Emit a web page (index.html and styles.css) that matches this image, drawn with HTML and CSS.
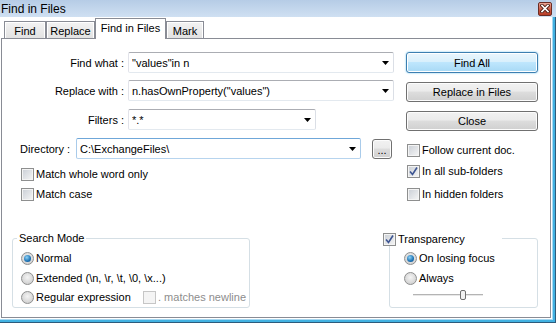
FILE: index.html
```html
<!DOCTYPE html>
<html lang="en">
<head>
  <meta charset="UTF-8">
  <meta name="viewport" content="width=device-width, initial-scale=1.0">
  <title>Find in Files</title>
  <link rel="stylesheet" href="styles.css">
</head>
<body>
  <div class="window">

    <!-- Title bar -->
    <div class="titlebar">
      <span class="title">Find in Files</span>
      <span class="close-btn">
        <svg width="10" height="9" viewBox="0 0 10 9">
          <path d="M2 1.5 L8 7.5 M8 1.5 L2 7.5" stroke="#4a1a12" stroke-width="3.4" stroke-linecap="square"/>
          <path d="M2 1.5 L8 7.5 M8 1.5 L2 7.5" stroke="#fff" stroke-width="1.7" stroke-linecap="square"/>
        </svg>
      </span>
    </div>

    <div class="frame">
      <!-- Tabs -->
      <div class="tabs">
        <div class="tab tab-find">Find</div>
        <div class="tab tab-replace">Replace</div>
        <div class="tab tab-files active">Find in Files</div>
        <div class="tab tab-mark">Mark</div>
      </div>

      <div class="panel">
        <div class="top">

          <!-- Left side: fields and options -->
          <div class="form">
            <div class="field-row">
              <span class="label">Find what :</span>
              <div class="combo combo-wide">
                <span class="combo-text">"values"in n</span>
                <svg class="arrow" width="7" height="4" viewBox="0 0 7 4"><path d="M0 0h7L3.5 4z"/></svg>
              </div>
            </div>
            <div class="field-row tight">
              <span class="label">Replace with :</span>
              <div class="combo combo-wide">
                <span class="combo-text">n.hasOwnProperty("values")</span>
                <svg class="arrow" width="7" height="4" viewBox="0 0 7 4"><path d="M0 0h7L3.5 4z"/></svg>
              </div>
            </div>
            <div class="field-row">
              <span class="label">Filters :</span>
              <div class="combo combo-filters">
                <span class="combo-text">*.*</span>
                <svg class="arrow" width="7" height="4" viewBox="0 0 7 4"><path d="M0 0h7L3.5 4z"/></svg>
              </div>
            </div>
            <div class="field-row dir-row">
              <span class="label label-dir">Directory :</span>
              <div class="combo combo-dir focused">
                <span class="combo-text">C:\ExchangeFiles\</span>
                <svg class="arrow" width="7" height="4" viewBox="0 0 7 4"><path d="M0 0h7L3.5 4z"/></svg>
              </div>
              <div class="btn browse">...</div>
            </div>

            <div class="checks checks-left">
              <div class="check"><span class="cb"></span>Match whole word only</div>
              <div class="check second"><span class="cb"></span>Match case</div>
            </div>
          </div>

          <!-- Right side: actions and folder options -->
          <div class="side">
            <div class="btn btn-default">Find All</div>
            <div class="btn">Replace in Files</div>
            <div class="btn">Close</div>

            <div class="checks checks-right">
              <div class="check"><span class="cb"></span>Follow current doc.</div>
              <div class="check sub"><span class="cb checked">
                <svg width="11" height="11" viewBox="0 0 11 11"><path d="M2 5.5 L4.5 8.5 L9 1.5" fill="none" stroke="#3d5592" stroke-width="1.6"/></svg>
              </span>In all sub-folders</div>
              <div class="check hidden"><span class="cb"></span>In hidden folders</div>
            </div>
          </div>
        </div>

        <div class="bottom">
          <div class="group search-group">
            <span class="group-title">Search Mode</span>
            <div class="opt"><span class="radio"><span class="dot"></span></span>Normal</div>
            <div class="opt">
              <span class="radio"></span>Extended (\n, \r, \t, \0, \x...)
            </div>
            <div class="opt last">
              <span class="opt-regex"><span class="radio"></span>Regular expression</span>
              <span class="cb disabled"></span><span class="disabled-text">. matches newline</span>
            </div>
          </div>

          <div class="group trans-group">
            <span class="group-title trans-title"><span class="cb checked">
              <svg width="11" height="11" viewBox="0 0 11 11"><path d="M2 5.5 L4.5 8.5 L9 1.5" fill="none" stroke="#3d5592" stroke-width="1.6"/></svg>
            </span>Transparency</span>
            <div class="opt"><span class="radio"><span class="dot"></span></span>On losing focus</div>
            <div class="opt"><span class="radio"></span>Always</div>
            <div class="slider"><span class="thumb"></span></div>
          </div>
        </div>
      </div>
    </div>
  </div>
</body>
</html>
```

FILE: styles.css
```css
body {
  margin: 0;
  font-family: "Liberation Sans", Arial, sans-serif;
  font-size: 11px;
  color: #000;
  background: #fff;
}
.window {
  width: 556px;
  height: 323px;
  background: #fff;
  overflow: hidden;
}

/* title bar */
.titlebar {
  height: 17px;
  box-sizing: border-box;
  display: flex;
  align-items: center;
  justify-content: space-between;
  padding: 0 4px 0 1px;
  background: linear-gradient(#b6cce6, #cfe0f2);
}
.title {
  font-size: 12px;
}
.close-btn {
  width: 14px;
  height: 14px;
  box-sizing: border-box;
  border: 1px solid #6b2c24;
  border-radius: 2px;
  background: linear-gradient(#eaa797, #cd5a44 55%, #b53c26);
  display: flex;
  align-items: center;
  justify-content: center;
}

/* window body with the frame on right and bottom */
.frame {
  height: 306px;
  display: flex;
  flex-direction: column;
  box-shadow: inset -1px -1px 0 #2c5b7c, inset -3px -3px 0 #41b1e1, inset -4px -4px 0 #a8d8f1;
}

/* tabs */
.tabs {
  height: 21px;
  display: flex;
  align-items: flex-end;
  padding-left: 4px;
}
.tab {
  height: 17px;
  box-sizing: border-box;
  border: 1px solid #898c95;
  border-bottom: 0;
  background: linear-gradient(#f3f3f3, #e2e2e2);
  box-shadow: inset 1px 1px 0 #fff, inset -1px 0 0 #fff;
  display: flex;
  align-items: center;
  justify-content: center;
  padding-top: 1px;
}
.tab.active {
  height: 21px;
  margin-bottom: -1px;
  background: #fff;
  box-shadow: none;
  padding-top: 0;
  padding-bottom: 2px;
  position: relative;
  z-index: 1;
}
.tab-find { width: 42px; }
.tab-replace { width: 49px; }
.tab-files { width: 71px; }
.tab-mark { width: 38px; }

/* tab page */
.panel {
  margin-left: 1px;
  width: 550px;
  height: 280px;
  box-sizing: border-box;
  border: 1px solid #898c95;
  background: #fff;
  display: flex;
  flex-direction: column;
}
.top {
  display: flex;
  padding-top: 13px;
}
.form {
  width: 404px;
}
.side {
  width: 132px;
}

.field-row {
  display: flex;
  align-items: center;
  height: 21px;
  margin-top: 8px;
}
.field-row:first-child {
  margin-top: 0;
}
.field-row.tight {
  margin-top: 7px;
}
.label {
  width: 122px;
  margin-right: 4px;
  text-align: right;
  white-space: nowrap;
}
.dir-row {
  padding-left: 18px;
}
.label-dir {
  width: 52px;
  text-align: left;
}

.combo {
  height: 21px;
  box-sizing: border-box;
  border: 1px solid;
  border-color: #abadb3 #dbdfe6 #e3e9ef #e2e3ea;
  border-radius: 2px;
  display: flex;
  align-items: center;
  padding: 0 4px 0 3px;
}
.combo.focused {
  border-color: #6fa7d9 #a9cbea #b7d4ee #a9cbea;
}
.combo-text {
  flex: 1;
  white-space: nowrap;
  overflow: hidden;
}
.arrow {
  flex: none;
}
.combo-wide { width: 266px; }
.combo-filters { width: 188px; }
.combo-dir { width: 285px; }

/* buttons */
.btn {
  height: 20px;
  box-sizing: border-box;
  border: 1px solid #707070;
  border-radius: 3px;
  background: linear-gradient(#f2f2f2, #ebebeb 45%, #dddddd 50%, #cfcfcf);
  box-shadow: inset 0 0 0 1px #fcfcfc;
  display: flex;
  align-items: center;
  justify-content: center;
  margin-top: 9px;
}
.side .btn:first-child {
  margin-top: 0;
}
.btn-default {
  height: 21px;
  border-color: #3c7fb1;
  background: linear-gradient(#eaf6fd, #d9f0fc 45%, #bee6fd 50%, #a7d9f5);
  box-shadow: inset 0 0 0 1px #fff, 0 0 2px #6cc0ec;
}
.browse {
  width: 20px;
  margin: 0 0 0 11px;
  align-items: flex-end;
  padding-bottom: 3px;
  line-height: 9px;
}

/* checkboxes */
.check {
  display: flex;
  align-items: center;
  height: 13px;
  line-height: 13px;
  white-space: nowrap;
}
.cb {
  width: 13px;
  height: 13px;
  box-sizing: border-box;
  flex: none;
  border: 1px solid #8e8f8f;
  background: linear-gradient(135deg, #c9ced5, #f6f6f6);
  box-shadow: inset 0 0 0 1px #f4f4f4;
  margin-right: 2px;
  display: flex;
  align-items: center;
  justify-content: center;
}
.cb.disabled {
  border-color: #c6c6c6;
  background: #f4f4f4;
  box-shadow: none;
}
.disabled-text {
  color: #8d8d8d;
}
.checks-left {
  padding-left: 19px;
}
.checks-left .check {
  margin-top: 9px;
}
.checks-left .check.second {
  margin-top: 7px;
}
.checks-right {
  padding-left: 1px;
}
.checks-right .check {
  margin-top: 13px;
}
.checks-right .check.sub {
  margin-top: 8px;
}
.checks-right .check.hidden {
  margin-top: 10px;
}

/* bottom group boxes */
.bottom {
  margin-top: auto;
  display: flex;
  justify-content: space-between;
  padding: 0 12px 9px 10px;
}
.group {
  position: relative;
  height: 70px;
  box-sizing: border-box;
  border: 1px solid #d5dfe5;
  border-radius: 3px;
  padding-top: 9px;
}
.search-group {
  width: 238px;
  padding-left: 8px;
}
.trans-group {
  width: 149px;
  padding-left: 14px;
}
.group-title {
  position: absolute;
  top: -7px;
  left: 4px;
  padding: 0 2px;
  line-height: 13px;
  background: #fff;
}
.trans-title {
  top: -6px;
  left: -7px;
  width: 119px;
  padding: 0;
  display: flex;
  align-items: center;
}

.opt {
  display: flex;
  align-items: center;
  height: 20px;
  white-space: nowrap;
}
.opt.last {
  height: 18px;
}
.opt-regex {
  width: 122px;
  display: flex;
  align-items: center;
}
.radio {
  width: 13px;
  height: 13px;
  box-sizing: border-box;
  flex: none;
  border: 1px solid #8e8f8f;
  border-radius: 50%;
  background: radial-gradient(circle at 50% 40%, #f4f4f4, #d2d2d2 75%);
  margin-right: 2px;
  display: flex;
  align-items: center;
  justify-content: center;
}
.dot {
  width: 7px;
  height: 7px;
  border-radius: 50%;
  background: radial-gradient(circle at 40% 35%, #8fd3f6, #1c72b4 60%, #0d4a86);
}

/* transparency slider */
.slider {
  width: 70px;
  height: 10px;
  margin: 2px 0 0 9px;
  display: flex;
  background: linear-gradient(transparent 4px, #b4b4b4 4px, #b4b4b4 5px, #e8e8e8 5px, #e8e8e8 6px, transparent 6px);
}
.thumb {
  width: 6px;
  height: 10px;
  box-sizing: border-box;
  margin-left: 47px;
  border: 1px solid #6f6f6f;
  border-radius: 2px;
  background: #f2f2f2;
}
```
